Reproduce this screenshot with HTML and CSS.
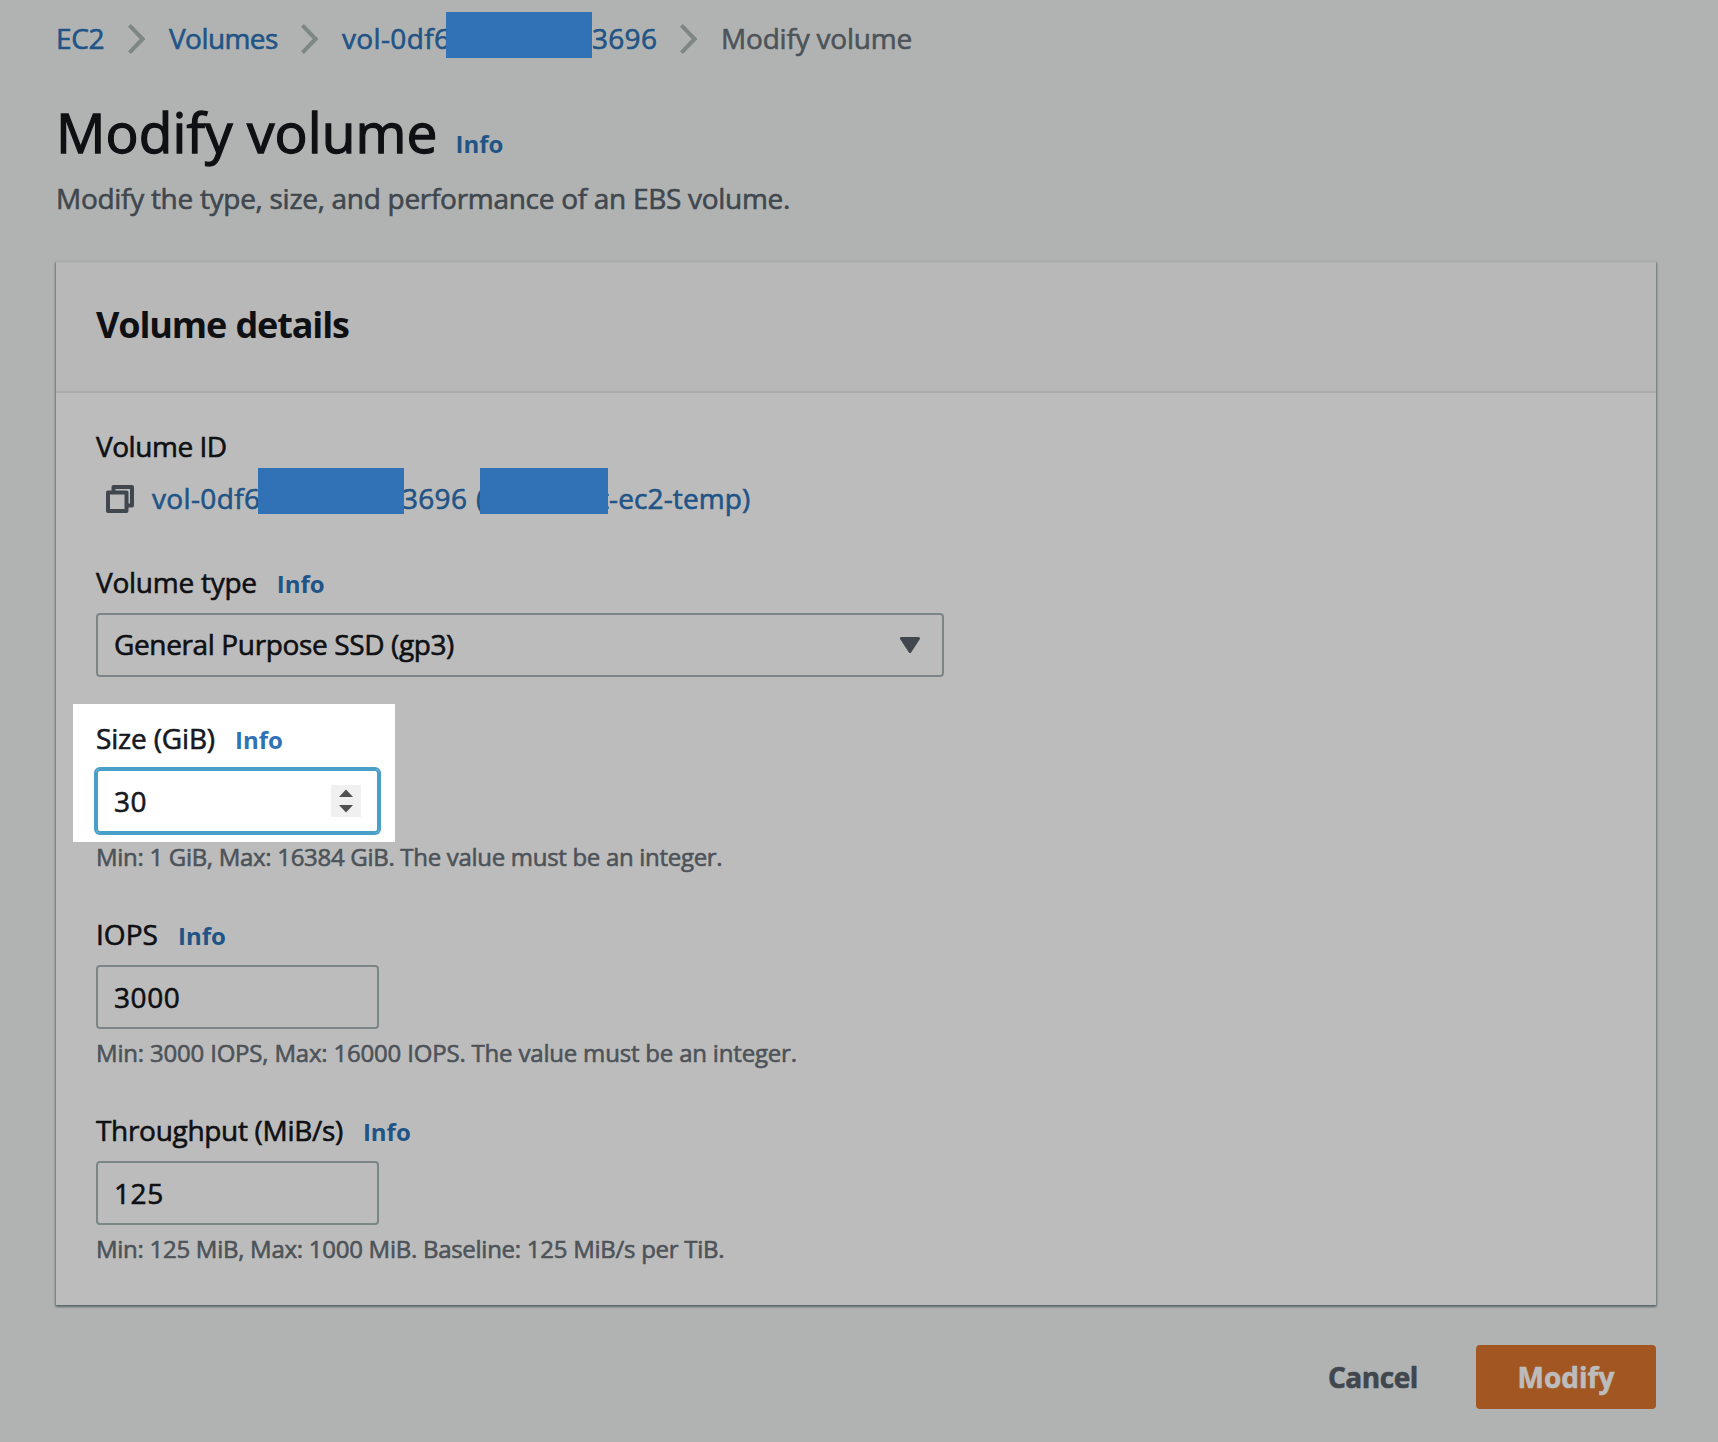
FILE: index.html
```html
<!DOCTYPE html>
<html lang="en">
<head>
<meta charset="utf-8">
<title>Modify volume</title>
<link rel="stylesheet" href="styles.css">
</head>
<body>
<main class="page">
  <nav class="breadcrumbs">
    <a class="link crumb-ec2">EC2</a>
    <svg class="chevron" viewBox="0 0 17 30"><path d="M1.4 1.4 14.6 15 1.4 28.6"/></svg>
    <a class="link crumb-volumes">Volumes</a>
    <svg class="chevron" viewBox="0 0 17 30"><path d="M1.4 1.4 14.6 15 1.4 28.6"/></svg>
    <a class="link volume-link"><span class="id-start">vol-0df6</span><span class="redacted"></span><span class="id-end">3696</span></a>
    <svg class="chevron" viewBox="0 0 17 30"><path d="M1.4 1.4 14.6 15 1.4 28.6"/></svg>
    <span class="crumb-current">Modify volume</span>
  </nav>

  <header class="title">
    <h1>Modify volume</h1>
    <a class="info">Info</a>
  </header>
  <p class="subtitle">Modify the type, size, and performance of an EBS volume.</p>

  <section class="card">
    <div class="card-header"><h2>Volume details</h2></div>
    <div class="card-body">
      <div class="field">
        <div class="label"><span class="label-id">Volume ID</span></div>
        <div class="id-row">
          <svg class="copy" viewBox="0 0 28 28"><path d="M7.5 7V2H26v18.5h-5"/><path d="M2 7.5h18.5V26H2z"/></svg>
          <a class="link volume-link"><span class="id-start">vol-0df6</span><span class="redacted"></span><span class="id-end">3696</span><span class="paren">(</span><span class="redacted redacted-name"></span><span class="name-end">t-ec2-temp)</span></a>
        </div>
      </div>

      <div class="field">
        <div class="label"><span class="label-type">Volume type</span><a class="info">Info</a></div>
        <div class="select">
          <span>General Purpose SSD (gp3)</span>
          <svg class="caret" viewBox="0 0 20 16"><path d="M1.5 1.5h17L10 14.5z"/></svg>
        </div>
      </div>

      <div class="field highlighted">
        <div class="label"><span class="label-size">Size (GiB)</span><a class="info">Info</a></div>
        <div class="input focused">
          <span>30</span>
          <svg class="spinner" viewBox="0 0 30 32"><path d="M8 12 15 4.5 22 12zM8 20h14l-7 7.5z"/></svg>
        </div>
        <p class="hint">Min: 1 GiB, Max: 16384 GiB. The value must be an integer.</p>
      </div>

      <div class="field">
        <div class="label"><span class="label-iops">IOPS</span><a class="info">Info</a></div>
        <div class="input"><span>3000</span></div>
        <p class="hint hint-iops">Min: 3000 IOPS, Max: 16000 IOPS. The value must be an integer.</p>
      </div>

      <div class="field">
        <div class="label"><span class="label-throughput">Throughput (MiB/s)</span><a class="info">Info</a></div>
        <div class="input"><span>125</span></div>
        <p class="hint hint-throughput">Min: 125 MiB, Max: 1000 MiB. Baseline: 125 MiB/s per TiB.</p>
      </div>
    </div>
  </section>

  <footer class="actions">
    <button class="button cancel">Cancel</button>
    <button class="button primary">Modify</button>
  </footer>
</main>
</body>
</html>
```
FILE: styles.css
```css
* { box-sizing: border-box; }

body {
  margin: 0;
  background: #b1b3b2;
  color: #0f1014;
  font: 400 28px/40px "Open Sans", "Noto Sans", sans-serif;
  -webkit-text-stroke: 0.6px currentColor;
}

h1, h2, p { margin: 0; font-weight: 400; }

svg { display: block; flex: none; }

.page {
  min-height: 1442px;
  padding: 18px 62px 33px 56px;
}

.link { color: #215486; }

/* Breadcrumbs */
.breadcrumbs {
  display: flex;
  align-items: flex-start;
  gap: 24px;
  height: 40px;
  white-space: nowrap;
}
.crumb-ec2 { width: 48px; letter-spacing: -0.35px; }
.crumb-volumes { width: 108px; letter-spacing: -0.57px; }
.crumb-current { color: #4d5359; letter-spacing: -0.2px; }
.chevron {
  width: 17px;
  height: 30px;
  margin-top: 6px;
  fill: none;
  stroke: #7d8886;
  stroke-width: 4;
}

/* Volume identifiers */
.volume-link {
  display: flex;
  align-items: flex-start;
  height: 40px;
  white-space: nowrap;
}
.id-start { width: 104px; letter-spacing: 0.36px; }
.redacted {
  position: relative;
  z-index: 1;
  width: 146px;
  height: 46px;
  margin-top: -6px;
  background: #3172b7;
}
.id-end { width: 64px; letter-spacing: 0.3px; }

.title {
  display: flex;
  align-items: baseline;
  gap: 18px;
  margin-top: 37px;
  height: 72px;
}
.title h1 {
  font-size: 55px;
  line-height: 74px;
  letter-spacing: 0.08px;
  -webkit-text-stroke-width: 1.3px;
}
.info {
  color: #215486;
  font-size: 24px;
  font-weight: 700;
  line-height: 32px;
  -webkit-text-stroke-width: 0;
}
.subtitle { margin-top: 11px; color: #40474e; letter-spacing: -0.29px; }

/* Card */
.card {
  margin-top: 43px;
  border-top: 2px solid #adaeae;
  background: #bcbcbc;
  box-shadow: 0 1px 2px #4d575d, 1px 2px 2px #87908f, -1px 2px 2px #87908f;
}
.card-header {
  height: 130px;
  padding: 40px 40px 0;
  border-bottom: 2px solid #acacac;
  background: #b8b8b8;
}
.card-header h2 {
  font-size: 36px;
  font-weight: 700;
  line-height: 44px;
  letter-spacing: -1.13px;
  word-spacing: 1px;
  -webkit-text-stroke-width: 0;
}
.card-body {
  display: flex;
  flex-direction: column;
  gap: 41px;
  padding: 33px 40px 40px;
}
.label {
  display: flex;
  align-items: baseline;
  gap: 20px;
  height: 40px;
  margin-bottom: 11px;
}
.label-id { letter-spacing: -0.46px; }
.label-type { letter-spacing: -0.25px; }
.label-size { letter-spacing: -0.16px; }
.label-iops { letter-spacing: 0.05px; }
.label-throughput { letter-spacing: -0.31px; }

.id-row {
  display: flex;
  height: 44px;
  padding: 1px 0 0 10px;
}
.id-row .volume-link { margin-left: 18px; }
.id-row .id-start { width: 106px; }
.id-row .redacted { margin-top: -10px; }
.id-row .redacted-name { width: 128px; }
.id-row .id-end { width: 74px; margin-left: -2px; }
.paren { width: 4px; }
.name-end { margin-left: -9px; letter-spacing: 0.12px; }
.copy {
  width: 28px;
  height: 28px;
  margin-top: 7px;
  fill: none;
  stroke: #40474e;
  stroke-width: 4;
  stroke-linejoin: round;
}

.select, .input {
  display: flex;
  align-items: center;
  justify-content: space-between;
  height: 64px;
  padding: 0 16px;
  border: 2px solid #7b8786;
  border-radius: 4px;
}
.select { width: 848px; padding-right: 22px; letter-spacing: -0.37px; }
.select span { margin-bottom: 2px; }
.input { width: 283px; letter-spacing: 0.6px; }
.caret {
  width: 20px;
  height: 16px;
  fill: #40474e;
  stroke: #40474e;
  stroke-width: 3;
  stroke-linejoin: round;
}
.hint {
  margin-top: 8px;
  color: #4d5359;
  font-size: 24px;
  line-height: 32px;
  letter-spacing: -0.3px;
}
.hint-iops { letter-spacing: -0.19px; }
.hint-throughput { letter-spacing: -0.27px; }

/* Spotlighted field */
.highlighted { position: relative; z-index: 0; }
.highlighted::before {
  content: "";
  position: absolute;
  z-index: -1;
  left: -23px;
  top: -14px;
  width: 322px;
  height: 138px;
  background: #fff;
}
.highlighted .label { color: #16191f; }
.highlighted .info { color: #3172b7; }
.focused {
  border-color: #489fc7;
  box-shadow: 0 0 0 2px #489fc7;
  color: #16191f;
}
.spinner { width: 30px; height: 32px; background: #f0f0f0; fill: #505050; }

/* Actions */
.actions {
  display: flex;
  justify-content: flex-end;
  gap: 18px;
  margin-top: 40px;
}
.button {
  height: 64px;
  padding: 0 40px;
  border: 0;
  border-radius: 4px;
  background: none;
  font: 700 28px/40px "Open Sans", "Noto Sans", sans-serif;
}
.cancel { color: #40474e; letter-spacing: -0.42px; }
.primary { width: 180px; background: #a25722; color: #bcbcbc; }
```
